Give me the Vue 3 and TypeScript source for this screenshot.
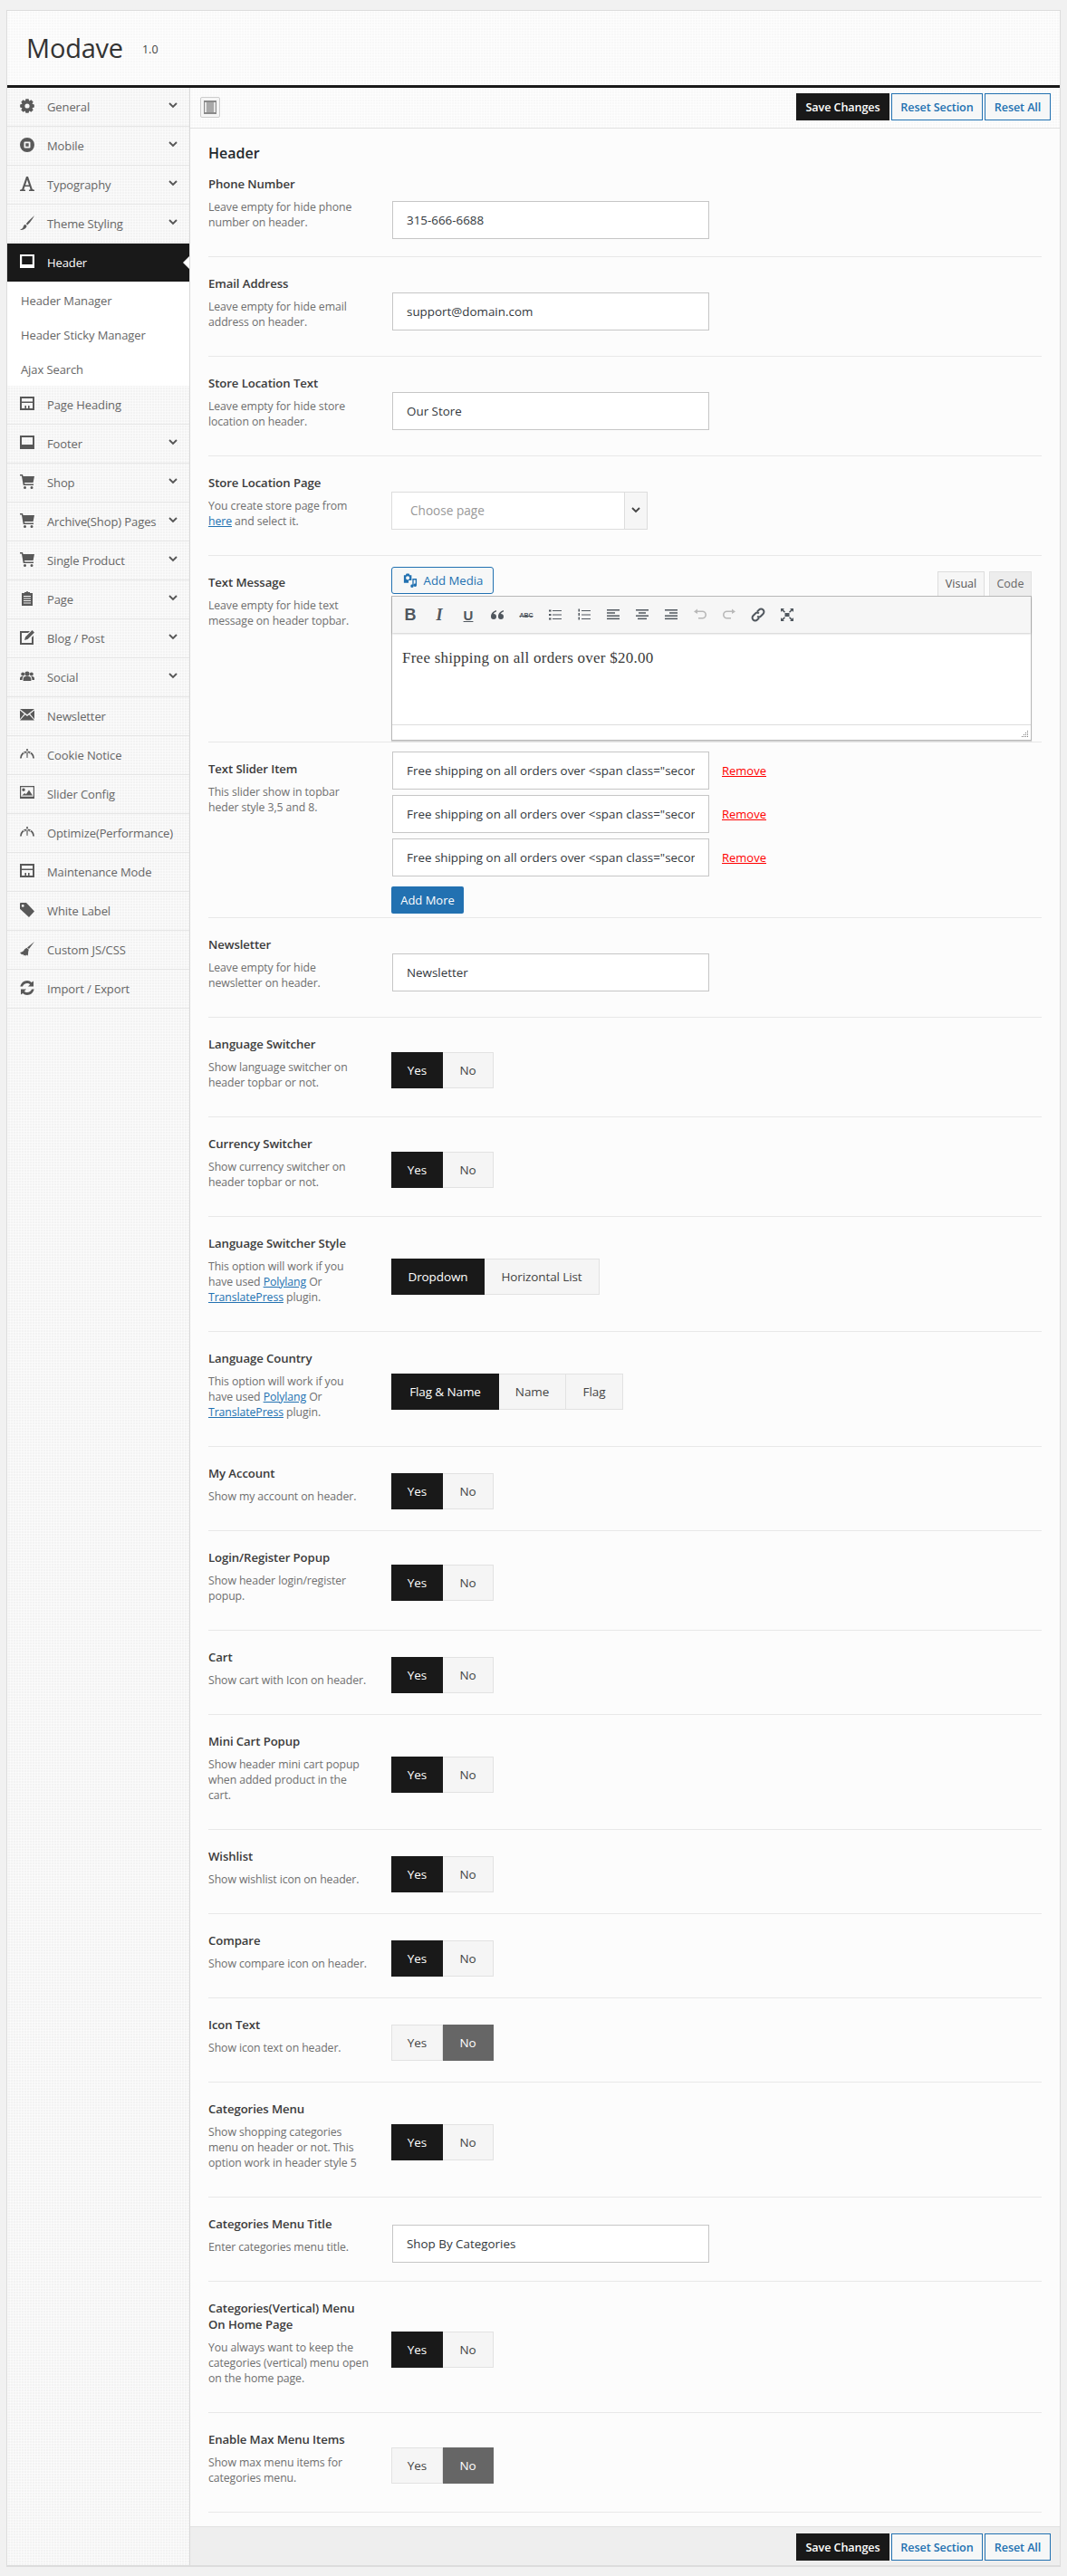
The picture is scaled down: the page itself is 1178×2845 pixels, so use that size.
<script setup lang="ts">
type Seg = { t: string; link: boolean }

function gear(): string {
  let d = ''
  const n = 8
  for (let i = 0; i < n; i++) {
    const a = (i / n) * Math.PI * 2
    const w = 0.26
    const pts: [number, number][] = [
      [6, a - w - 0.12], [8, a - w + 0.06], [8, a + w - 0.06], [6, a + w + 0.12]
    ]
    for (const [r, t] of pts) {
      const x = (8 + r * Math.cos(t)).toFixed(2)
      const y = (8 + r * Math.sin(t)).toFixed(2)
      d += (d ? 'L' : 'M') + x + ' ' + y
    }
  }
  return d + 'Z M8 5.4a2.6 2.6 0 1 0 0 5.2a2.6 2.6 0 1 0 0-5.2Z'
}

const cart = 'M0 0h3l.6 2H16l-1.4 7H5l.3 1.4H15V12H3.8L1.9 1.6H0Z M5.5 13a1.5 1.5 0 1 0 0 3a1.5 1.5 0 1 0 0-3Z M13 13a1.5 1.5 0 1 0 0 3a1.5 1.5 0 1 0 0-3Z'
const gauge = 'M0 12.5a8 8 0 1 1 16 0h-1.8a6.2 6.2 0 1 0-12.4 0Z M7.3 5h1.4l-.2 7h-1Z M3.6 6.6l1-.8l1 1.4l-.7.7Z M12.4 6.6l-1-.8l-1 1.4l.7.7Z M7.2 1.9h1.6v2H7.2Z'
const layout = 'M0 0h16v15H0Z M2 2v3.4h12V2Z M2 7v6h3.4V10H7v3h2v-3h1.6v3H14V7Z'

const icons: Record<string, string> = {
  gear: gear(),
  mobile: 'M8 0a8 8 0 1 0 0 16a8 8 0 1 0 0-16Z M5.5 4.5h5a1 1 0 0 1 1 1v5a1 1 0 0 1-1 1h-5a1 1 0 0 1-1-1v-5a1 1 0 0 1 1-1Z M6.3 6.3v3.4h3.4V6.3Z',
  type: 'M7 0h2l4.8 14l2.2.8V16h-6v-1.2l1.6-.6l-1-3.2H5.4l-1 3.2l1.6.6V16H0v-1.2l2.2-.8Z M8 3.6L6 9.4h4Z',
  brush: 'M16 0C13 3 9.2 6 6.8 9.2l1.4 1.4C11 8 14 4 16 0Z M6 10C4 10 4 12.5 3 14L0 16c4 .3 7-1.5 7.6-4.4Z',
  header: 'M0 0h16v15H0Z M2.2 2v9h11.6V2Z',
  layout,
  footer: 'M0 0h16v15H0Z M2 2v8h12V2Z',
  cart,
  page: 'M2 2h3V1h2a1 1 0 0 1 2 0h2v1h3v15H2Z M4 5v1h8V5Z M4 7.5v1h8v-1Z M4 10v1h8v-1Z M4 12.5v1h8v-1Z',
  edit: 'M0 1h11L9 3H2v11h11V8l2-2v10H0Z M13.5 0L16 2.5L8.5 10L5 11l1-3.5Z',
  group: 'M8 2.5a2.6 2.6 0 1 0 0 5.2a2.6 2.6 0 1 0 0-5.2Z M3.2 3.6a2 2 0 1 0 0 4a2 2 0 1 0 0-4Z M12.8 3.6a2 2 0 1 0 0 4a2 2 0 1 0 0-4Z M3.6 13v-2c0-2 1.6-2.8 2.6-3h3.6c1 .2 2.6 1 2.6 3v2Z M0 12v-2c0-1 1-2 2.4-2h1.4C3 9 2.6 10 2.6 12Z M16 12v-2c0-1-1-2-2.4-2h-1.4c.8 1 1.2 2 1.2 4Z',
  mail: 'M0 1h16L8 7.2Z M0 2.6v9.6l4.8-5.8Z M16 2.6v9.6l-4.8-5.8Z M0 13.4L5.8 7.2L8 9l2.2-1.8L16 13.4Z',
  gauge,
  image: 'M0 0h16v14H0Z M1.2 1.2v10.6h13.6V1.2Z M4 2.6a1.7 1.7 0 1 0 0 3.4a1.7 1.7 0 1 0 0-3.4Z M2.2 10.6l3-2.6l1.6 1.2L10 4.6l4 6Z',
  tag: 'M0 1a1 1 0 0 1 1-1h6l9 9.5l-6 6.5L0 6.8Z M3.2 2a1.4 1.4 0 1 0 0 2.8a1.4 1.4 0 1 0 0-2.8Z',
  broom: 'M16 0l-6 8l-2-1.4ZM7.4 6.8l2.4 2l-.6 2.2l-.4 4.6l-1.8-1l-.6 1.2l-1.2-1l-1 .6l-.4-1.4l-1.8.2L0 12c2.8-.6 4.4-2 5-3.6Z',
  sync: 'M8 0c2 0 3.6.8 4.8 2L15 .5V6.5H9l2.2-2.2C10.4 3.4 9.3 3 8 3C5.6 3 3.8 4.4 3 6.5H.3C1.2 2.8 4.2 0 8 0Z M1 9.5h6l-2.2 2.2c.8.9 1.9 1.3 3.2 1.3c2.4 0 4.2-1.4 5-3.5h2.7C14.8 13.2 11.8 16 8 16c-2 0-3.6-.8-4.8-2L1 15.5Z'
}

const menuTop = [
  { label: 'General', icon: 'gear', arrow: true },
  { label: 'Mobile', icon: 'mobile', arrow: true },
  { label: 'Typography', icon: 'type', arrow: true },
  { label: 'Theme Styling', icon: 'brush', arrow: true }
]
const subItems = ['Header Manager', 'Header Sticky Manager', 'Ajax Search']
const menuBottom = [
  { label: 'Page Heading', icon: 'layout', arrow: false },
  { label: 'Footer', icon: 'footer', arrow: true },
  { label: 'Shop', icon: 'cart', arrow: true },
  { label: 'Archive(Shop) Pages', icon: 'cart', arrow: true },
  { label: 'Single Product', icon: 'cart', arrow: true },
  { label: 'Page', icon: 'page', arrow: true },
  { label: 'Blog / Post', icon: 'edit', arrow: true },
  { label: 'Social', icon: 'group', arrow: true },
  { label: 'Newsletter', icon: 'mail', arrow: false },
  { label: 'Cookie Notice', icon: 'gauge', arrow: false },
  { label: 'Slider Config', icon: 'image', arrow: false },
  { label: 'Optimize(Performance)', icon: 'gauge', arrow: false },
  { label: 'Maintenance Mode', icon: 'layout', arrow: false },
  { label: 'White Label', icon: 'tag', arrow: false },
  { label: 'Custom JS/CSS', icon: 'broom', arrow: false },
  { label: 'Import / Export', icon: 'sync', arrow: false }
]

function segs(line: string): Seg[] {
  return line.split(/(\[[^\]]+\])/).filter(Boolean).map((p) =>
    p.startsWith('[') ? { t: p.slice(1, -1), link: true } : { t: p, link: false }
  )
}

type Row = {
  title: string[]
  desc: string[]
  kind: 'input' | 'select' | 'editor' | 'slider' | 'btns'
  value?: string
  options?: { t: string; w: number }[]
  active?: number
}

const yesNo = [{ t: 'Yes', w: 57 }, { t: 'No', w: 56 }]
const yes = (title: string | string[], desc: string[]): Row => ({
  title: Array.isArray(title) ? title : [title], desc, kind: 'btns', options: yesNo, active: 0
})
const no = (title: string, desc: string[]): Row => ({
  title: [title], desc, kind: 'btns', options: yesNo, active: 1
})

const rows: Row[] = [
  { title: ['Phone Number'], desc: ['Leave empty for hide phone', 'number on header.'], kind: 'input', value: '315-666-6688' },
  { title: ['Email Address'], desc: ['Leave empty for hide email', 'address on header.'], kind: 'input', value: 'support@domain.com' },
  { title: ['Store Location Text'], desc: ['Leave empty for hide store', 'location on header.'], kind: 'input', value: 'Our Store' },
  { title: ['Store Location Page'], desc: ['You create store page from', '[here] and select it.'], kind: 'select' },
  { title: ['Text Message'], desc: ['Leave empty for hide text', 'message on header topbar.'], kind: 'editor' },
  { title: ['Text Slider Item'], desc: ['This slider show in topbar', 'heder style 3,5 and 8.'], kind: 'slider' },
  { title: ['Newsletter'], desc: ['Leave empty for hide', 'newsletter on header.'], kind: 'input', value: 'Newsletter' },
  yes('Language Switcher', ['Show language switcher on', 'header topbar or not.']),
  yes('Currency Switcher', ['Show currency switcher on', 'header topbar or not.']),
  {
    title: ['Language Switcher Style'],
    desc: ['This option will work if you', 'have used [Polylang] Or', '[TranslatePress] plugin.'],
    kind: 'btns', active: 0,
    options: [{ t: 'Dropdown', w: 103 }, { t: 'Horizontal List', w: 127 }]
  },
  {
    title: ['Language Country'],
    desc: ['This option will work if you', 'have used [Polylang] Or', '[TranslatePress] plugin.'],
    kind: 'btns', active: 0,
    options: [{ t: 'Flag & Name', w: 119 }, { t: 'Name', w: 74 }, { t: 'Flag', w: 63 }]
  },
  yes('My Account', ['Show my account on header.']),
  yes('Login/Register Popup', ['Show header login/register', 'popup.']),
  yes('Cart', ['Show cart with Icon on header.']),
  yes('Mini Cart Popup', ['Show header mini cart popup', 'when added product in the', 'cart.']),
  yes('Wishlist', ['Show wishlist icon on header.']),
  yes('Compare', ['Show compare icon on header.']),
  no('Icon Text', ['Show icon text on header.']),
  yes('Categories Menu', ['Show shopping categories', 'menu on header or not. This', 'option work in header style 5']),
  { title: ['Categories Menu Title'], desc: ['Enter categories menu title.'], kind: 'input', value: 'Shop By Categories' },
  yes(['Categories(Vertical) Menu', 'On Home Page'], ['You always want to keep the', 'categories (vertical) menu open', 'on the home page.']),
  no('Enable Max Menu Items', ['Show max menu items for', 'categories menu.'])
]

const slideText = 'Free shipping on all orders over <span class="secondary">$20.00</span>'
const lists = [0, 1, 2]
</script>

<template>
  <div class="panel">
    <header class="top">
      <h1 class="brand">Modave</h1>
      <span class="ver">1.0</span>
    </header>
    <div class="main">
      <nav class="side">
        <a v-for="m in menuTop" :key="m.label" class="item">
          <svg class="ico" viewBox="0 0 16 16"><path :d="icons[m.icon]" fill-rule="evenodd" /></svg>
          <span class="lbl">{{ m.label }}</span>
          <svg v-if="m.arrow" class="chev" viewBox="0 0 10 7"><path d="M1 1l4 4l4-4" /></svg>
        </a>
        <a class="item active">
          <svg class="ico" viewBox="0 0 16 16"><path :d="icons.header" fill-rule="evenodd" /></svg>
          <span class="lbl">Header</span>
          <span class="notch"></span>
        </a>
        <div class="sub">
          <a v-for="s in subItems" :key="s" class="subitem">{{ s }}</a>
        </div>
        <a v-for="m in menuBottom" :key="m.label" class="item">
          <svg class="ico" viewBox="0 0 16 16"><path :d="icons[m.icon]" fill-rule="evenodd" /></svg>
          <span class="lbl">{{ m.label }}</span>
          <svg v-if="m.arrow" class="chev" viewBox="0 0 10 7"><path d="M1 1l4 4l4-4" /></svg>
        </a>
      </nav>
      <div class="content">
        <div class="bar">
          <span class="expand"><i></i></span>
          <div class="actions">
            <button class="save">Save Changes</button>
            <button class="reset">Reset Section</button>
            <button class="reset">Reset All</button>
          </div>
        </div>
        <section class="form">
          <h2 class="heading">Header</h2>
          <div v-for="(r, idx) in rows" :key="r.title[0]" class="row" :class="[`k-${r.kind}`, { first: idx === 0 }]">
            <div class="info">
              <div class="title"><div v-for="t in r.title" :key="t">{{ t }}</div></div>
              <div class="desc">
                <div v-for="l in r.desc" :key="l">
                  <template v-for="(s, i) in segs(l)" :key="i">
                    <a v-if="s.link" class="lnk">{{ s.t }}</a><template v-else>{{ s.t }}</template>
                  </template>
                </div>
              </div>
            </div>
            <div class="ctrl">
              <input v-if="r.kind === 'input'" class="txt" :value="r.value" readonly />

              <div v-else-if="r.kind === 'select'" class="select">
                <span class="ph">Choose page</span>
                <span class="caret"><svg class="chev dark" viewBox="0 0 10 7"><path d="M1 1l4 4l4-4" /></svg></span>
              </div>

              <div v-else-if="r.kind === 'editor'" class="ed">
                <div class="ed-top">
                  <button class="media">
                    <svg class="media-ico" viewBox="0 0 18 16">
                      <path fill-rule="evenodd" d="M2 2h2l1-2h3l1 2h2v6H7.5v3H2Z M6.5 3a2.2 2.2 0 1 0 0 4.4a2.2 2.2 0 1 0 0-4.4Z" />
                      <path d="M12 6h5v7.5a1.8 1.8 0 1 1-1.4-1.7V7.5h-2.2v7a1.8 1.8 0 1 1-1.4-1.7Z" />
                    </svg>
                    Add Media
                  </button>
                  <div class="tabs">
                    <span class="tab on">Visual</span>
                    <span class="tab">Code</span>
                  </div>
                </div>
                <div class="ed-box">
                  <div class="ed-tools">
                    <span class="t g b">B</span>
                    <span class="t g i">I</span>
                    <span class="t g u">U</span>
                    <span class="t"><svg viewBox="0 0 16 16"><path d="M7 3C3.5 4 1 6.5 1 10a3 3 0 1 0 3-3c.3-1 1.3-2 3-2.5ZM15 3c-3.5 1-6 3.5-6 7a3 3 0 1 0 3-3c.3-1 1.3-2 3-2.5Z" /></svg></span>
                    <span class="t g abc"><s>ABC</s></span>
                    <span class="t"><svg viewBox="0 0 16 16"><template v-for="n in lists" :key="n"><rect x="1" :y="2.5 + n * 4.5" width="2.5" height="2" /><rect x="5" :y="3 + n * 4.5" width="10" height="1" /></template></svg></span>
                    <span class="t"><svg viewBox="0 0 16 16"><template v-for="n in lists" :key="n"><rect x="1.5" :y="1.5 + n * 4.5" width="1.5" height="3" /><rect x="5" :y="3 + n * 4.5" width="10" height="1" /></template></svg></span>
                    <span class="t"><svg viewBox="0 0 16 16"><rect x="1" y="2" width="14" height="1.5" /><rect x="1" y="5.2" width="9" height="1.5" /><rect x="1" y="8.4" width="14" height="1.5" /><rect x="1" y="11.6" width="14" height="1.5" /></svg></span>
                    <span class="t"><svg viewBox="0 0 16 16"><rect x="1" y="2" width="14" height="1.5" /><rect x="4" y="5.2" width="8" height="1.5" /><rect x="1" y="8.4" width="14" height="1.5" /><rect x="3" y="11.6" width="10" height="1.5" /></svg></span>
                    <span class="t"><svg viewBox="0 0 16 16"><rect x="1" y="2" width="14" height="1.5" /><rect x="6" y="5.2" width="9" height="1.5" /><rect x="1" y="8.4" width="14" height="1.5" /><rect x="1" y="11.6" width="14" height="1.5" /></svg></span>
                    <span class="t off"><svg viewBox="0 0 16 16"><path d="M5 1v2h5.5a4.5 4.5 0 0 1 0 9H6v-1.6h4.5a2.9 2.9 0 0 0 0-5.800H5v2L1 4Z" transform="translate(0 .5)" /></svg></span>
                    <span class="t off"><svg viewBox="0 0 16 16"><path d="M11 1v2H5.5a4.5 4.5 0 0 0 0 9H10v-1.6H5.5a2.9 2.9 0 0 1 0-5.800H11v2L15 4Z" transform="translate(0 .5)" /></svg></span>
                    <span class="t"><svg viewBox="0 0 16 16" class="linkico"><path d="M7 4.5l2-2a2.7 2.7 0 0 1 4.5 4.5l-2.5 2.5a2.7 2.7 0 0 1-3.8 0M9 11.5l-2 2A2.7 2.7 0 0 1 2.5 9L5 6.5a2.7 2.7 0 0 1 3.8 0" /></svg></span>
                    <span class="t"><svg viewBox="0 0 16 16"><path d="M5.5 6h5v4h-5Z" /><path d="M1 1h4l-1.3 1.3L6 4.8l-1 1L2.4 3.4L1 5ZM15 1v4l-1.4-1.6L11 5.8l-1-1l2.3-2.5L11 1ZM1 15v-4l1.4 1.6L5 10.2l1 1l-2.3 2.5L5 15ZM15 15h-4l1.3-1.3L10 11.2l1-1l2.6 2.4L15 11Z" /></svg></span>
                  </div>
                  <div class="ed-body">Free shipping on all orders over $20.00</div>
                  <div class="ed-status">
                    <svg class="grip" viewBox="0 0 10 10"><path d="M8 1h1v1H8ZM6 3h1v1H6ZM8 3h1v1H8ZM4 5h1v1H4ZM6 5h1v1H6ZM8 5h1v1H8ZM2 7h1v1H2ZM4 7h1v1H4ZM6 7h1v1H6ZM8 7h1v1H8Z" /></svg>
                  </div>
                </div>
              </div>

              <div v-else-if="r.kind === 'slider'" class="slides">
                <div v-for="n in lists" :key="n" class="slide">
                  <input class="txt" :value="slideText" readonly />
                  <a class="remove">Remove</a>
                </div>
                <button class="more">Add More</button>
              </div>

              <div v-else class="seg">
                <span
                  v-for="(o, i) in r.options"
                  :key="o.t"
                  class="opt"
                  :class="{ on: i === r.active && r.active === 0, offon: i === r.active && r.active === 1 }"
                  :style="{ width: o.w + 'px' }"
                >{{ o.t }}</span>
              </div>
            </div>
          </div>
        </section>
        <footer class="foot">
          <div class="actions">
            <button class="save">Save Changes</button>
            <button class="reset">Reset Section</button>
            <button class="reset">Reset All</button>
          </div>
        </footer>
      </div>
    </div>
  </div>
</template>

<style>
html, body { margin: 0; background: #f1f1f1; }
</style>

<style scoped>
.panel {
  box-sizing: border-box;
  width: 1164px;
  margin: 11px 0 10px 7px;
  border: 1px solid #dcdcdc;
  border-bottom-width: 2px;
  font-family: "Open Sans", "Noto Sans", sans-serif;
  font-size: 12px;
  color: #444;
}
.top {
  height: 82px;
  box-sizing: border-box;
  display: flex;
  align-items: center;
  padding: 0 21px;
  background-color: #f8f8f8;
  background-image: linear-gradient(rgba(255,255,255,.55) 1px, transparent 1px), linear-gradient(90deg, rgba(255,255,255,.55) 1px, transparent 1px);
  background-size: 3px 3px;
}
.brand { margin: 0; font-size: 29px; line-height: 36px; font-weight: 500; color: #333; letter-spacing: -.2px; }
.ver { margin: 2px 0 0 21px; font-size: 12.5px; color: #444; }
.main { display: flex; border-top: 3px solid #191919; }
.side {
  width: 202px;
  box-sizing: border-box;
  flex: none;
  border-right: 1px solid #d8d8d8;
  background-color: #f3f3f3;
  background-image: linear-gradient(rgba(255,255,255,.5) 1px, transparent 1px), linear-gradient(90deg, rgba(255,255,255,.5) 1px, transparent 1px);
  background-size: 3px 3px;
}
.item {
  position: relative;
  display: flex;
  align-items: center;
  height: 43px;
  box-sizing: border-box;
  border-bottom: 1px solid #e6e6e6;
  padding: 0 13px 0 14px;
  color: #666;
  font-weight: 500;
  font-size: 13px;
  letter-spacing: -.1px;
}
.ico { width: 16px; height: 16px; flex: none; fill: #595959; margin: -3px 14px 0 0; }
.lbl { flex: 1; white-space: nowrap; }
.chev { width: 10px; height: 7px; flex: none; fill: none; stroke: #555; stroke-width: 1.8; margin-top: -3px; }
.active { background: #191919; color: #fff; height: 42px; border-bottom: 0; }
.active .ico { fill: #fff; }
.notch {
  position: absolute;
  right: 0;
  top: 14px;
  border: 7px solid transparent;
  border-right-color: #fff;
  border-left-width: 0;
}
.sub { background: #fff; padding: 2px 0 0; height: 115px; box-sizing: border-box; }
.subitem {
  display: block;
  height: 38px;
  line-height: 38px;
  padding-left: 15px;
  color: #666;
  font-weight: 500;
  font-size: 13px;
  letter-spacing: -.1px;
}
.content { flex: 1; min-width: 0; background: #fcfcfc; display: flex; flex-direction: column; }
.bar {
  height: 45px;
  box-sizing: border-box;
  border-bottom: 1px solid #e2e2e2;
  display: flex;
  align-items: flex-start;
  justify-content: space-between;
  padding: 6px 10px 0 11px;
  background-color: #f8f8f8;
  background-image: linear-gradient(rgba(255,255,255,.55) 1px, transparent 1px), linear-gradient(90deg, rgba(255,255,255,.55) 1px, transparent 1px);
  background-size: 3px 3px;
}
.expand {
  width: 22px;
  height: 23px;
  box-sizing: border-box;
  border: 1px solid #ccc;
  border-radius: 2px;
  background: #f5f5f5;
  margin-top: 4px;
  padding: 3px;
  display: block;
}
.expand i {
  display: block;
  width: 100%;
  height: 100%;
  box-sizing: border-box;
  border: 1px solid #8a8a8a;
  border-top-width: 2px;
  border-bottom-width: 2px;
  background: linear-gradient(90deg, #e4e4e4 0 2px, #a8a8a8 2px 10px, #e4e4e4 10px);
}
.actions { display: flex; gap: 2px; }
.actions button {
  height: 30px;
  padding: 0;
  border-radius: 0;
  font-family: inherit;
  font-size: 12.6px;
  font-weight: 600;
  letter-spacing: -.1px;
}
.save { width: 103px; background: #191919; color: #fff; border: 1px solid #191919; }
.reset { background: #f6f7f7; color: #2271b1; border: 1px solid #2271b1; }
.reset:nth-child(2) { width: 101px; }
.reset:nth-child(3) { width: 73px; }
.form { padding: 17px 20px 15px; flex: 1; }
.heading { margin: 0; font-size: 16px; line-height: 21px; font-weight: 600; color: #23282d; }
.row { display: flex; border-bottom: 1px solid #e8e8e8; }
.info { width: 202px; flex: none; box-sizing: border-box; padding: 20px 10px 28.2px 0; }
.first .info { padding-top: 14px; }
.title { font-size: 13.2px; line-height: 18px; font-weight: 600; color: #3b3b3b; letter-spacing: -.1px; }
.desc { margin-top: 9px; font-size: 12.3px; line-height: 16.9px; color: #6f6f6f; white-space: nowrap; letter-spacing: -.1px; }
.lnk { color: #2271b1; text-decoration: underline; }
.ctrl { flex: 1; min-width: 0; align-self: center; margin-top: 6px; }
.k-input .ctrl { margin-top: 10px; }
.k-select .ctrl { margin-top: 10px; }
.first .ctrl { align-self: flex-start; margin-top: 42px; }
.k-editor .ctrl { align-self: flex-start; margin-top: 12px; padding-bottom: 1px; }
.k-slider .ctrl { align-self: flex-start; margin-top: 10px; padding-bottom: 4px; }
.txt {
  display: block;
  box-sizing: border-box;
  width: 350px;
  height: 42px;
  margin-left: 1px;
  padding: 0 15px;
  border: 1px solid #c6c6c6;
  border-radius: 0;
  background: #fff;
  color: #32373c;
  font-family: inherit;
  font-size: 13.4px;
  outline: 0;
}
.select {
  width: 283px;
  height: 42px;
  box-sizing: border-box;
  border: 1px solid #ddd;
  background: #fff;
  display: flex;
  align-items: center;
}
.ph { flex: 1; padding-left: 20px; color: #999; font-size: 13.6px; }
.caret {
  width: 24px;
  height: 100%;
  display: flex;
  align-items: center;
  justify-content: center;
  border-left: 1px solid #ddd;
  background: #f6f6f6;
}
.chev.dark { margin: 0; stroke: #444; }
.ed { width: 707px; }
.ed-top { display: flex; justify-content: space-between; align-items: flex-end; height: 32px; }
.media {
  align-self: flex-start;
  width: 113px;
  height: 30px;
  padding: 0;
  border: 1px solid #2271b1;
  border-radius: 3px;
  background: #f6f7f7;
  color: #2271b1;
  font-family: inherit;
  font-size: 13.2px;
  display: flex;
  align-items: center;
  justify-content: center;
  gap: 7px;
}
.media-ico { width: 17px; height: 16px; fill: #2271b1; }
.tabs { display: flex; gap: 5px; position: relative; top: 1px; }
.tab {
  width: 47px;
  height: 28px;
  line-height: 26px;
  text-align: center;
  box-sizing: border-box;
  border: 1px solid #e2e2e2;
  border-bottom: 0;
  background: #ededed;
  color: #666;
  font-size: 12.5px;
}
.tab.on { width: 52px; background: #f6f6f6; color: #555; border-color: #ddd; }
.ed-box {
  position: relative;
  height: 160px;
  box-sizing: border-box;
  border: 1px solid #b8b8b8;
  border-top-color: #bbb;
  background: #fff;
  box-shadow: 0 1px 1px rgba(0,0,0,.15);
}
.ed-tools {
  height: 40px;
  display: flex;
  align-items: center;
  padding-left: 4px;
  background: #f6f6f6;
  box-shadow: 0 1px 2px rgba(0,0,0,.2);
  position: relative;
}
.t {
  width: 32px;
  height: 32px;
  flex: none;
  display: flex;
  align-items: center;
  justify-content: center;
  color: #50575e;
  font-family: "Liberation Sans", sans-serif;
}
.t svg { width: 16px; height: 16px; fill: #50575e; }
.t.off svg { fill: #b8b8b8; }
.g { font-weight: 700; font-size: 15px; }
.g.b { font-size: 18px; }
.g.i { font-style: italic; font-family: "Liberation Serif", serif; font-size: 18px; }
.g.u { text-decoration: underline; font-size: 15px; }
.g.abc { font-size: 7px; }
.t svg.linkico { fill: none; stroke: #50575e; stroke-width: 2; }
.ed-body {
  height: 101px;
  box-sizing: border-box;
  padding: 18px 11px 0;
  font-family: "Liberation Serif", serif;
  font-weight: 400;
  font-size: 17px;
  line-height: 20px;
  color: #3a3a3a;
  letter-spacing: .25px;
}
.ed-status {
  position: relative;
  height: 17px;
  border-top: 1px solid #ddd;
}
.grip { position: absolute; right: 2px; bottom: 2px; width: 10px; height: 10px; fill: #777; }
.slides { display: flex; flex-direction: column; align-items: flex-start; }
.slide { display: flex; align-items: center; height: 42px; margin-bottom: 6px; }
.remove { margin-left: 14px; color: #f00; text-decoration: underline; font-size: 13px; }
.more {
  margin-top: 5px;
  width: 80px;
  height: 30px;
  padding: 0;
  border: 0;
  border-radius: 2px;
  background: #2271b1;
  color: #fff;
  font-family: inherit;
  font-size: 13px;
}
.seg { display: flex; }
.opt {
  height: 40px;
  line-height: 38px;
  box-sizing: border-box;
  text-align: center;
  border: 1px solid #e2e2e2;
  border-left-width: 0;
  background: #f5f5f5;
  color: #444;
  font-size: 13.5px;
  letter-spacing: -.1px;
}
.opt:first-child { border-left-width: 1px; }
.opt.on { background: #191919; border-color: #191919; color: #fff; }
.opt.offon { background: #666; border-color: #666; color: #fff; }
.foot {
  height: 43px;
  box-sizing: border-box;
  padding: 7px 10px 0 0;
  background: #eee;
  border-top: 1px solid #e2e2e2;
  display: flex;
  justify-content: flex-end;
}
</style>
